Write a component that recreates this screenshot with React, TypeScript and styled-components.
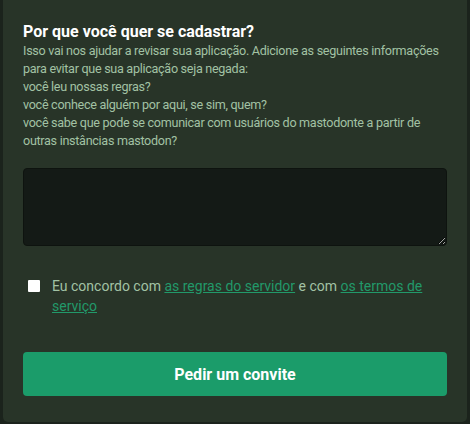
import React from "react";
import styled, { createGlobalStyle } from "styled-components";

const GlobalStyle = createGlobalStyle`
  html, body {
    margin: 0;
    padding: 0;
    background: #1b231c;
    font-family: Roboto, "Liberation Sans", sans-serif;
  }
`;

const Page = styled.div`
  width: 470px;
  height: 424px;
  display: flex;
  padding-left: 3px;
  box-sizing: border-box;
`;

const Card = styled.div`
  width: 464px;
  height: 422px;
  box-sizing: border-box;
  background: #283428;
  border-radius: 0 0 5px 5px;
  padding: 22px 20px 0;
  display: flex;
  flex-direction: column;
`;

const Title = styled.h3`
  margin: 0;
  font-size: 16px;
  line-height: 20px;
  font-weight: 700;
  color: #ffffff;
`;

const Hint = styled.p`
  margin: 0;
  font-size: 12.6px;
  letter-spacing: -0.3px;
  line-height: 18px;
  color: #a2c2a4;
`;

const TextArea = styled.textarea`
  margin-top: 18px;
  height: 78px;
  width: 100%;
  box-sizing: border-box;
  background: #141a16;
  border: 1px solid #0e130f;
  border-radius: 4px;
  color: #fff;
  resize: vertical;
  font: inherit;
  outline: none;
`;

const AgreeRow = styled.label`
  display: flex;
  align-items: flex-start;
  gap: 12px;
  margin-top: 30px;
  padding-left: 5px;
  font-size: 14px;
  line-height: 20px;
  color: #a2c2a4;
`;

const Box = styled.span`
  flex: none;
  width: 12px;
  height: 12px;
  margin-top: 4px;
  background: #ffffff;
  border-radius: 1px;
`;

const Link = styled.a`
  color: #22996a;
  text-decoration: underline;
`;

const Submit = styled.button`
  margin-top: 36px;
  height: 44px;
  width: 100%;
  border: 0;
  border-radius: 4px;
  background: #1b9c6a;
  color: #ffffff;
  font-family: inherit;
  font-size: 16px;
  font-weight: 700;
  cursor: pointer;
`;

export default function App() {
  return (
    <>
      <GlobalStyle />
      <Page>
        <Card>
          <Title>Por que você quer se cadastrar?</Title>
          <Hint>
            Isso vai nos ajudar a revisar sua aplicação. Adicione as seguintes
            informações para evitar que sua aplicação seja negada:
            <br />
            você leu nossas regras?
            <br />
            você conhece alguém por aqui, se sim, quem?
            <br />
            você sabe que pode se comunicar com usuários do mastodonte a partir
            de outras instâncias mastodon?
          </Hint>
          <TextArea />
          <AgreeRow>
            <Box />
            <span>
              Eu concordo com <Link href="#">as regras do servidor</Link> e com{" "}
              <Link href="#">os termos de serviço</Link>
            </span>
          </AgreeRow>
          <Submit>Pedir um convite</Submit>
        </Card>
      </Page>
    </>
  );
}
